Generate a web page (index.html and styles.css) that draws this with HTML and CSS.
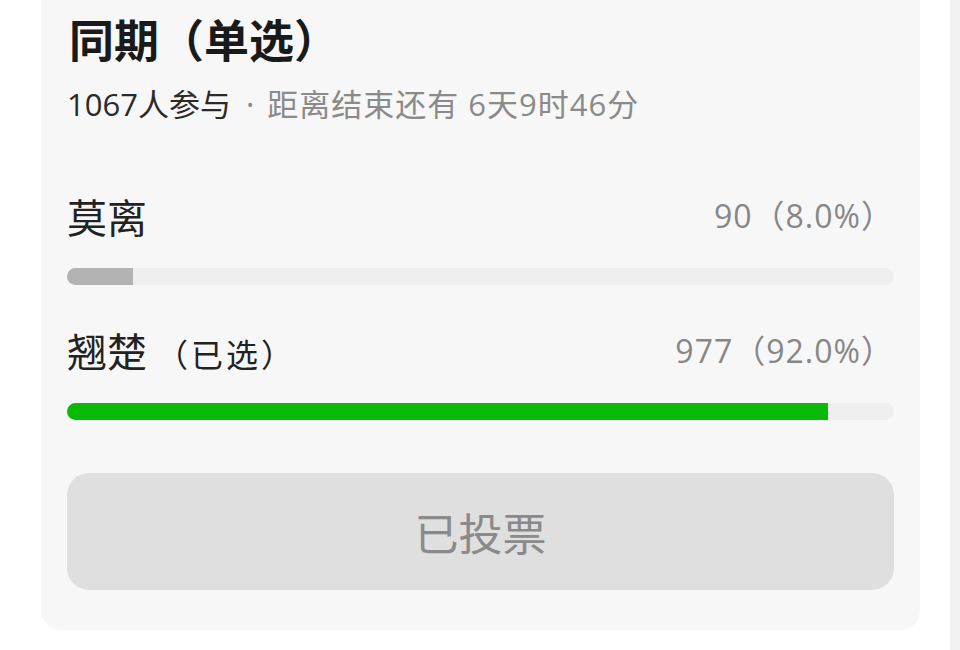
FILE: index.html
```html
<!DOCTYPE html>
<html lang="zh-CN">
<head>
<meta charset="utf-8">
<title>投票</title>
<link rel="stylesheet" href="styles.css">
</head>
<body>
<div class="page">
  <main class="column">
    <section class="vote-card">
      <h1 class="vote-title">同期（单选）</h1>
      <p class="vote-meta"><span class="meta-count">1067人参与</span><span class="meta-dot">·</span><span class="meta-time">距离结束还有 6天9时46分</span></p>

      <div class="option">
        <div class="option-row">
          <span class="option-name">莫离</span>
          <span class="option-stat">90（8.0%）</span>
        </div>
        <div class="bar"><div class="bar-fill" style="width: 8%"></div></div>
      </div>

      <div class="option">
        <div class="option-row">
          <span class="option-name">翘楚 <span class="option-picked">（已选）</span></span>
          <span class="option-stat">977（92.0%）</span>
        </div>
        <div class="bar"><div class="bar-fill is-chosen" style="width: 92%"></div></div>
      </div>

      <button class="vote-button" type="button" disabled>已投票</button>
    </section>
  </main>
  <aside class="side-strip"></aside>
</div>
</body>
</html>
```

FILE: styles.css
```css
* {
  box-sizing: border-box;
}

html, body {
  margin: 0;
  padding: 0;
  background: #ffffff;
}

body {
  font-family: "Noto Sans CJK SC", "Noto Sans", sans-serif;
  color: #222222;
}

.page {
  display: flex;
  width: 960px;
  height: 650px;
  overflow: hidden;
}

.column {
  flex: 0 0 950px;
}

.side-strip {
  flex: 0 0 10px;
  background: #f2f2f2;
}

.vote-card {
  margin-left: 41px;
  width: 879px;
  padding: 13px 26px 40px;
  background: #f7f7f7;
  border-radius: 0 0 20px 20px;
}

.vote-title {
  margin: 0;
  padding-left: 2px;
  font-size: 45px;
  line-height: 52px;
  font-weight: 700;
  color: #1a1a1a;
}

.vote-meta {
  margin: 19px 0 0;
  font-family: "Open Sans", "Noto Sans CJK SC", sans-serif;
  font-size: 31px;
  line-height: 40px;
}

.meta-count {
  color: #2a2a2a;
}

.meta-dot {
  margin: 0 13px 0 15px;
  font-family: "Noto Sans", sans-serif;
  color: #8a8a8a;
}

.meta-time {
  letter-spacing: 1px;
  color: #8a8a8a;
}

.option {
  margin-top: 70px;
}

.option + .option {
  margin-top: 44px;
}

.option-row {
  display: flex;
  justify-content: space-between;
  align-items: center;
  height: 44px;
}

.option-name {
  font-size: 40px;
  line-height: 44px;
  color: #222222;
}

.option-picked {
  font-size: 32px;
  letter-spacing: 3px;
}

.option-stat {
  font-family: "Open Sans", "Noto Sans CJK SC", sans-serif;
  font-size: 32px;
  line-height: 44px;
  letter-spacing: 1px;
  color: #878787;
}

.bar {
  margin-top: 30px;
  height: 17px;
  border-radius: 9px;
  background: #efefef;
  overflow: hidden;
}

.bar-fill {
  height: 100%;
  background: #b3b3b3;
}

.bar-fill.is-chosen {
  background: #09bb07;
}

.vote-button {
  display: flex;
  align-items: center;
  justify-content: center;
  width: 100%;
  height: 117px;
  margin-top: 53px;
  padding: 0;
  border: none;
  border-radius: 22px;
  background: #dfdfdf;
  font-family: inherit;
  font-size: 44px;
  color: #8a8a8a;
}
```
